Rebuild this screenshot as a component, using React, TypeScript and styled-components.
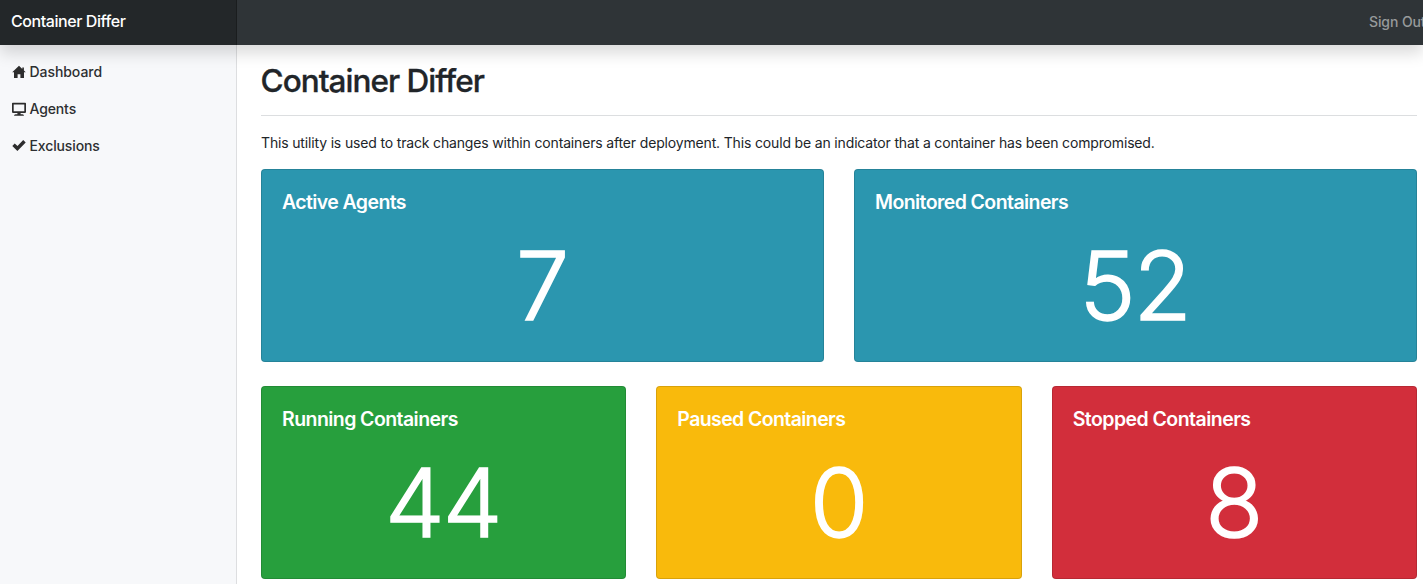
import React from "react";
import styled, { createGlobalStyle } from "styled-components";

const GlobalStyle = createGlobalStyle`
  *, *::before, *::after { box-sizing: border-box; }
  html { overflow: hidden; }
  body {
    margin: 0;
    overflow: hidden;
    background: #fff;
    color: #212529;
    font-family: Inter, "Liberation Sans", sans-serif;
    font-size: 14px;
    line-height: 1.5;
  }
`;

const Page = styled.div`
  display: flex;
  flex-direction: column;
  width: 100%;
  height: 100vh;
  overflow: hidden;
`;

const Navbar = styled.nav`
  position: relative;
  z-index: 2;
  display: flex;
  flex: none;
  align-items: center;
  justify-content: space-between;
  height: 45px;
  background: #2f3437;
  box-shadow: 0 8px 16px rgba(0, 0, 0, 0.15);
`;

const Brand = styled.a`
  width: 237px;
  height: 45px;
  padding: 9px 11px 0;
  color: #fff;
  font-size: 16px;
  font-weight: 500;
  line-height: 24px;
  letter-spacing: -0.43px;
  white-space: nowrap;
  background: rgba(0, 0, 0, 0.25);
  box-shadow: inset -1px 0 0 rgba(0, 0, 0, 0.25);
`;

const SignOut = styled.a`
  flex: none;
  width: 54px;
  overflow: hidden;
  color: #979a9b;
  font-weight: 500;
  letter-spacing: -0.1px;
  line-height: 21px;
  padding-bottom: 2px;
  white-space: nowrap;
`;

const Body = styled.div`
  display: flex;
  flex: 1;
  min-height: 0;
`;

const Sidebar = styled.aside`
  flex: none;
  width: 237px;
  padding-top: 8px;
  background: #f7f8fa;
  box-shadow: inset -1px 0 0 rgba(0, 0, 0, 0.1);
`;

const NavItem = styled.a`
  display: flex;
  align-items: flex-start;
  gap: 3.5px;
  height: 37px;
  padding: 8px 12px 0;
  color: #2d2f31;
  font-weight: 500;
`;

const Label = styled.span<{ $spacing: number }>`
  letter-spacing: ${(p) => p.$spacing}px;
`;

const Icon = styled.svg`
  display: block;
  flex: none;
  width: 14px;
  height: 14px;
  margin-top: 4px;
  fill: #2d2d2d;
`;

const Main = styled.main`
  flex: 1;
  min-width: 0;
  padding: 17px 6px 0 24px;
`;

const Heading = styled.h1`
  margin: 0 0 16px;
  padding-bottom: 15px;
  border-bottom: 1px solid #dcdee0;
  font-size: 31.5px;
  font-weight: 500;
  line-height: 38.4px;
  letter-spacing: -0.97px;
  text-indent: -0.5px;
  -webkit-text-stroke: 0.3px currentColor;
`;

const Intro = styled.p`
  margin: 0 0 16px;
  letter-spacing: -0.16px;
  white-space: nowrap;
`;

const CardRow = styled.div`
  display: flex;
  gap: 30px;
  margin-bottom: 24px;
`;

const Card = styled.section<{ $color: string }>`
  flex: 1 1 0;
  min-width: 0;
  padding: 20px;
  color: #fff;
  background: ${(p) => p.$color};
  background-clip: border-box;
  border: 1px solid rgba(0, 0, 0, 0.125);
  border-radius: 4px;
`;

const CardTitle = styled.h5<{ $spacing: number }>`
  margin: 0 0 12px;
  font-size: 19.5px;
  font-weight: 600;
  line-height: 24px;
  letter-spacing: ${(p) => p.$spacing}px;
`;

const Count = styled.div`
  padding-top: 4px;
  font-size: 95px;
  font-weight: 300;
  line-height: 111px;
  letter-spacing: -2px;
  text-indent: -2px;
  text-align: center;
  -webkit-text-stroke: 1.5px currentColor;
`;

type Stat = { title: string; value: number; color: string; spacing: number };

const rows: Stat[][] = [
  [
    { title: "Active Agents", value: 7, color: "#2b96af", spacing: -0.6 },
    { title: "Monitored Containers", value: 52, color: "#2b96af", spacing: -0.58 },
  ],
  [
    { title: "Running Containers", value: 44, color: "#279f3d", spacing: -0.57 },
    { title: "Paused Containers", value: 0, color: "#f9ba0c", spacing: -0.6 },
    { title: "Stopped Containers", value: 8, color: "#d22e3b", spacing: -0.54 },
  ],
];

export default function App() {
  return (
    <Page>
      <GlobalStyle />
      <Navbar>
        <Brand>Container Differ</Brand>
        <SignOut>Sign Out</SignOut>
      </Navbar>
      <Body>
        <Sidebar>
          <NavItem>
            <Icon viewBox="0 0 14 14">
              <path d="M7 .8 .2 7.2H2V13h3.6V9.3h2.8V13H12V7.2h1.8L11.9 5.4V2.6h-1.6v1.3Z" />
            </Icon>
            <Label $spacing={-0.06}>Dashboard</Label>
          </NavItem>
          <NavItem>
            <Icon viewBox="0 0 14 14">
              <path
                fillRule="evenodd"
                d="M.8 .7h12.4q.8 0 .8.8v8.6q0 .8-.8.8H8.6v1.4h1.9q1.5 0 1.5 1.5H2q0-1.5 1.5-1.5h1.9v-1.4H.8q-.8 0-.8-.8V1.5q0-.8.8-.8ZM1.7 2.4v6.8h10.6V2.4Z"
              />
            </Icon>
            <Label $spacing={-0.13}>Agents</Label>
          </NavItem>
          <NavItem>
            <Icon viewBox="0 0 14 14">
              <path d="M11.2 1 13.7 3.4 5.4 11.9 .3 7l2.4-2.4 2.8 2.4Z" />
            </Icon>
            <Label $spacing={-0.13}>Exclusions</Label>
          </NavItem>
        </Sidebar>
        <Main>
          <Heading>Container Differ</Heading>
          <Intro>
            This utility is used to track changes within containers after deployment. This could be an indicator that a
            container has been compromised.
          </Intro>
          {rows.map((row, i) => (
            <CardRow key={i}>
              {row.map((stat) => (
                <Card key={stat.title} $color={stat.color}>
                  <CardTitle $spacing={stat.spacing}>{stat.title}</CardTitle>
                  <Count>{stat.value}</Count>
                </Card>
              ))}
            </CardRow>
          ))}
        </Main>
      </Body>
    </Page>
  );
}
